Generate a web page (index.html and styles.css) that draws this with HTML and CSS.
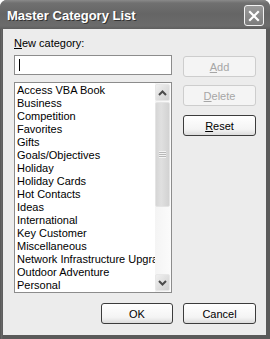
FILE: index.html
```html
<!DOCTYPE html>
<html lang="en">
<head>
    <meta charset="UTF-8">
    <title>Master Category List</title>
    <link rel="stylesheet" href="styles.css">
</head>
<body>
    <div class="window">
        <div class="titlebar">
            <span class="title">Master Category List</span>
            <span class="close">
                <svg width="12" height="12" viewBox="0 0 12 12">
                    <path d="M2 2 L10 10 M10 2 L2 10" stroke="#fff" stroke-width="2.2" stroke-linecap="square"/>
                </svg>
            </span>
        </div>

        <div class="content">
            <div class="main">
                <div class="left">
                    <label for="newcat"><u>N</u>ew category:</label>
                    <div class="textbox" id="newcat"><span class="caret"></span></div>

                    <div class="listbox">
                        <ul class="items">
                            <li>Access VBA Book</li>
                            <li>Business</li>
                            <li>Competition</li>
                            <li>Favorites</li>
                            <li>Gifts</li>
                            <li>Goals/Objectives</li>
                            <li>Holiday</li>
                            <li>Holiday Cards</li>
                            <li>Hot Contacts</li>
                            <li>Ideas</li>
                            <li>International</li>
                            <li>Key Customer</li>
                            <li>Miscellaneous</li>
                            <li>Network Infrastructure Upgrade</li>
                            <li>Outdoor Adventure</li>
                            <li>Personal</li>
                        </ul>
                        <div class="scrollbar">
                            <div class="sb-btn">
                                <svg width="9" height="6" viewBox="0 0 9 6"><path d="M1 5 L4.5 1.5 L8 5" fill="none" stroke="#4a4a4a" stroke-width="2"/></svg>
                            </div>
                            <div class="sb-thumb">
                                <span class="grip"></span>
                            </div>
                            <div class="sb-track"></div>
                            <div class="sb-btn">
                                <svg width="9" height="6" viewBox="0 0 9 6"><path d="M1 1 L4.5 4.5 L8 1" fill="none" stroke="#4a4a4a" stroke-width="2"/></svg>
                            </div>
                        </div>
                    </div>
                </div>

                <div class="right">
                    <button class="btn disabled"><u>A</u>dd</button>
                    <button class="btn disabled"><u>D</u>elete</button>
                    <button class="btn reset"><u>R</u>eset</button>
                </div>
            </div>

            <div class="footer">
                <button class="btn ok">OK</button>
                <button class="btn">Cancel</button>
            </div>
        </div>
    </div>
</body>
</html>
```

FILE: styles.css
```css
body {
    margin: 0;
    background-color: #fff;
    font-family: "Liberation Sans", Arial, sans-serif;
    font-size: 11px;
    color: #000;
}

.window {
    width: 270px;
    height: 339px;
    box-sizing: border-box;
    padding: 0 4px 4px 3px;
    background: linear-gradient(to right, #4a4a4a, #6a6a6a 1px, #5a5a5a 3px);
    border-radius: 7px 7px 0 0;
    display: flex;
    flex-direction: column;
}

.titlebar {
    height: 29px;
    margin: 0 -4px 0 -3px;
    padding: 0 6px 0 7px;
    display: flex;
    align-items: center;
    justify-content: space-between;
    border-radius: 7px 7px 0 0;
    background: linear-gradient(to bottom, #8a8a8a 0, #707070 3px, #656565 14px, #6b6b6b 26px, #5e5e5e 29px);
}

.title {
    font-weight: bold;
    font-size: 13px;
    color: #fff;
    text-shadow: 1px 1px 0 #333;
    margin-top: 1px;
}

.close {
    width: 18px;
    height: 19px;
    border: 1px solid #f2f2f2;
    border-radius: 3px;
    background: linear-gradient(to bottom, #9a9a9a, #7c7c7c);
    display: flex;
    align-items: center;
    justify-content: center;
    margin-top: 2px;
}

.content {
    flex: 1;
    background-color: #ececec;
    padding: 8px 10px 0 11px;
    display: flex;
    flex-direction: column;
}

.main {
    display: flex;
    gap: 11px;
}

.left {
    width: 158px;
    display: flex;
    flex-direction: column;
}

label {
    display: block;
    line-height: 13px;
    height: 13px;
}

.textbox {
    margin-top: 5px;
    height: 18px;
    border: 1px solid #8c8c8c;
    background-color: #fff;
    padding: 3px 3px;
    box-sizing: border-box;
    height: 20px;
}

.caret {
    display: block;
    width: 1px;
    height: 12px;
    background-color: #000;
    margin-left: 1px;
}

.listbox {
    margin-top: 7px;
    height: 211px;
    box-sizing: border-box;
    border: 1px solid #8c8c8c;
    background-color: #fff;
    display: flex;
}

.items {
    flex: 1;
    list-style: none;
    margin: 0;
    padding: 1px 0 0 2px;
    overflow: hidden;
    white-space: nowrap;
}

.items li {
    line-height: 13px;
    height: 13px;
}

.scrollbar {
    width: 16px;
    display: flex;
    flex-direction: column;
    background: linear-gradient(to right, #f4f4f4, #fbfbfb);
    padding: 1px 0;
}

.sb-btn {
    height: 15px;
    margin: 0 1px 0 0;
    border: 1px solid #e8e8e8;
    border-radius: 2px;
    background: linear-gradient(to bottom right, #f0f0f0, #d0d0d0);
    display: flex;
    align-items: center;
    justify-content: center;
}

.sb-thumb {
    height: 103px;
    margin: 1px 1px 0 0;
    border: 1px solid #e4e4e4;
    border-radius: 2px;
    background: linear-gradient(to right, #d6d6d6, #e0e0e0 40%, #d2d2d2);
    display: flex;
    align-items: center;
    justify-content: center;
}

.grip {
    width: 7px;
    height: 7px;
    background: repeating-linear-gradient(to bottom, #f4f4f4 0, #f4f4f4 1px, #b8b8b8 1px, #b8b8b8 2px);
}

.sb-track {
    flex: 1;
}

.right {
    width: 73px;
    display: flex;
    flex-direction: column;
    padding-top: 19px;
    gap: 8px;
}

.btn {
    width: 73px;
    height: 21px;
    padding: 0;
    font-family: "Liberation Sans", Arial, sans-serif;
    font-size: 11px;
    color: #000;
    border: 1px solid #3c3c3c;
    border-radius: 3px;
    background: linear-gradient(to bottom, #ffffff, #f4f4f4 70%, #dcdcdc);
}

.btn.disabled {
    color: #a6a6a6;
    border-color: #cdcdcd;
    background: #f4f4f4;
}

.btn.reset {
    margin-top: 1px;
}

.footer {
    margin-top: 10px;
    display: flex;
    justify-content: flex-end;
    gap: 10px;
}

.btn.ok {
    width: 72px;
}
```
